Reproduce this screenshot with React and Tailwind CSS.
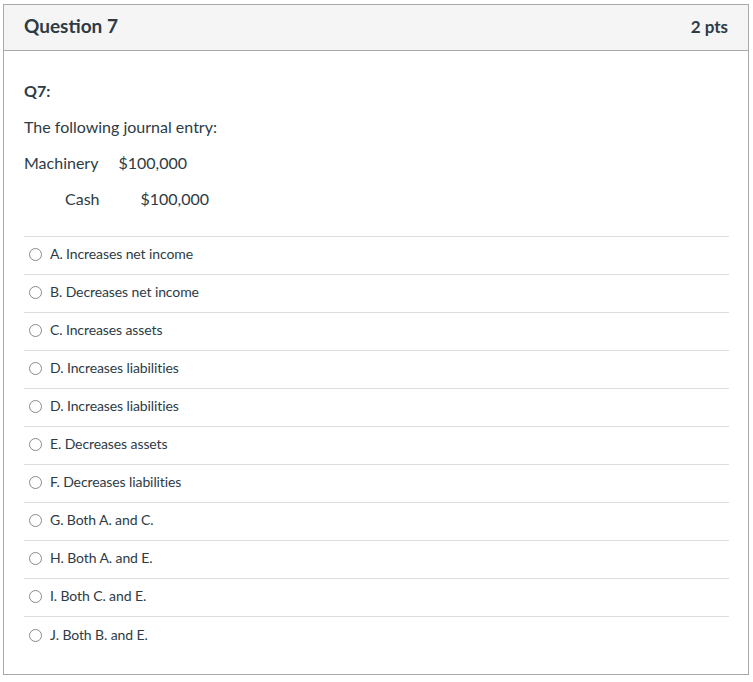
import React from 'react';

const options = [
  'A. Increases net income',
  'B. Decreases net income',
  'C. Increases assets',
  'D. Increases liabilities',
  'D. Increases liabilities',
  'E. Decreases assets',
  'F. Decreases liabilities',
  'G. Both A. and C.',
  'H. Both A. and E.',
  'I. Both C. and E.',
  'J. Both B. and E.',
];

export default function App() {
  return (
    <div className="bg-white pt-[4px] pl-[3px] w-[753px] h-[682px] text-[#2d3b45]" style={{ fontFamily: 'Lato, "Open Sans", sans-serif' }}>
      <div className="w-[746px] h-[671px] border border-[#a9a9a9] flex flex-col">
        {/* Header */}
        <div className="h-[46px] shrink-0 bg-[#f5f5f5] border-b border-[#a9a9a9] flex items-center justify-between pl-[20px] pr-[20px] pb-[3px]">
          <h2 className="text-[19px] font-bold">Question 7</h2>
          <span className="text-[17px] font-bold text-[#2d3b45] mt-[2px]">2 pts</span>
        </div>

        {/* Body */}
        <div className="px-[20px] pt-[28px]">
          <p className="text-[16px] font-bold leading-[24px]">Q7:</p>
          <p className="text-[16px] leading-[24px] mt-[12px]">The following journal entry:</p>
          <p className="text-[16px] leading-[24px] mt-[12px]">
            Machinery<span className="ml-[20px]">$100,000</span>
          </p>
          <p className="text-[16px] leading-[24px] mt-[12px] pl-[41px]">
            Cash<span className="ml-[41px]">$100,000</span>
          </p>

          <div className="mt-[25px] border-t border-[#dddddd] mr-[-1px]">
            {options.map((opt, idx) => (
              <div key={idx} className={`h-[38px] flex items-center pb-[3px] ${idx < options.length - 1 ? 'border-b border-[#dddddd]' : ''}`}>
                <span className="ml-[5px] mt-[1px] w-[13px] h-[13px] rounded-full border border-[#8a8a8a] bg-white shrink-0"></span>
                <span className="ml-[8px] text-[14px] leading-[20px] tracking-[-0.1px]">{opt}</span>
              </div>
            ))}
          </div>
        </div>
      </div>
    </div>
  );
}
